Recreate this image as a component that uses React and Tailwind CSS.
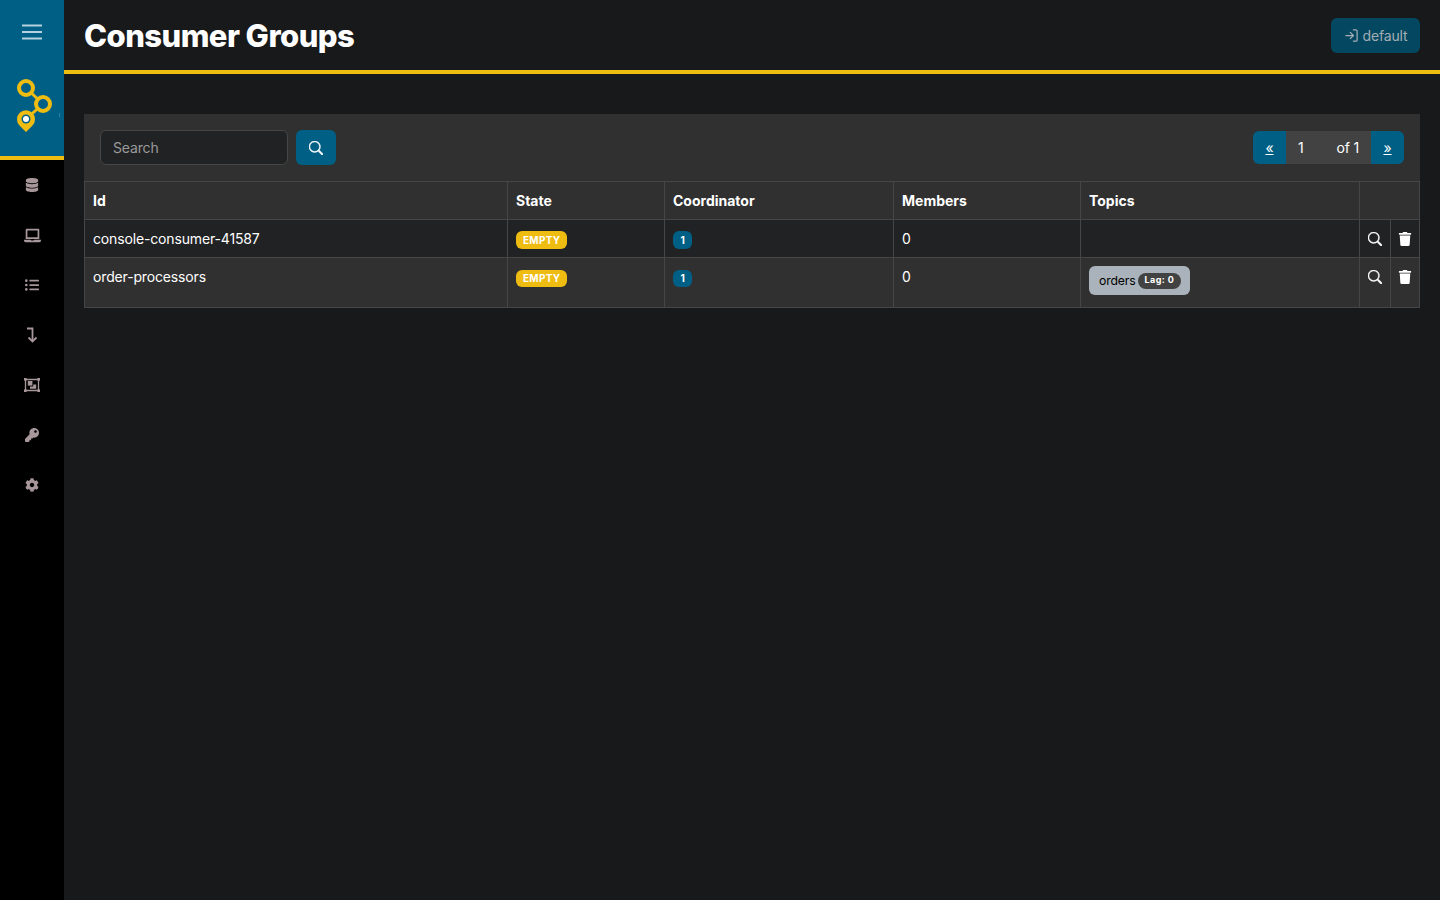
import React from 'react'
import { FaDatabase, FaLaptop, FaListUl, FaKey, FaCog, FaTrash } from 'react-icons/fa'
import { BsSearch } from 'react-icons/bs'
import { LogIn } from 'lucide-react'

function LevelDownIcon() {
  return (
    <svg width="12" height="16" viewBox="0 0 12 16" fill="none" stroke="currentColor" strokeWidth="1.800">
      <path d="M1 1.500H6.500V14" />
      <path d="M2.500 10.500L6.500 14.500L10.500 10.500" />
    </svg>
  )
}

function ObjectGroupIcon() {
  return (
    <svg width="16" height="14" viewBox="0 0 16 14" fill="currentColor">
      <path d="M1.500 1.500H14.500V12.500H1.500Z" fill="none" stroke="currentColor" strokeWidth="1.300" />
      <rect x="0" y="0" width="2.600" height="2.600" />
      <rect x="13.400" y="0" width="2.600" height="2.600" />
      <rect x="0" y="11.400" width="2.600" height="2.600" />
      <rect x="13.400" y="11.400" width="2.600" height="2.600" />
      <rect x="3.800" y="3" width="4.600" height="4.600" />
      <path d="M9.200 6.500H12.200V10.700H6V8.400H9.200Z" />
    </svg>
  )
}

const navIcons = [
  { Icon: FaDatabase },
  { Icon: FaLaptop, size: 17 },
  { Icon: FaListUl },
  { Icon: LevelDownIcon },
  { Icon: ObjectGroupIcon },
  { Icon: FaKey },
  { Icon: FaCog },
]

const groups = [
  { id: 'console-consumer-41587', topics: [], rowClass: 'bg-[#212224] h-[38px]', badgeClass: 'mt-[2px] h-[18px]' },
  { id: 'order-processors', topics: [{ name: 'orders', lag: 0 }], rowClass: 'bg-[#303030] h-[50px]', badgeClass: 'mt-[3px] h-[17px]' },
]

function Logo() {
  return (
    <svg width="64" height="72" viewBox="0 0 64 72" fill="none">
      <path d="M26 16 L43 32 L26 47" stroke="#efbc12" strokeWidth="3" />
      <circle cx="26" cy="16" r="7" fill="#005f85" stroke="#efbc12" strokeWidth="4" />
      <circle cx="43" cy="32" r="7" fill="#005f85" stroke="#efbc12" strokeWidth="4" />
      <path d="M26 60 L19.500 53.500 A9 9 0 1 1 32.500 53.500 Z" fill="#efbc12" />
      <circle cx="26" cy="47" r="4.500" fill="#005f85" />
      <circle cx="26" cy="47" r="3" fill="#ffffff" />
      <rect x="59" y="41" width="0.600" height="4" fill="#4d93ae" />
    </svg>
  )
}

function Sidebar() {
  return (
    <aside className="w-16 shrink-0 bg-black">
      <div className="h-[160px] bg-[#005f85] border-b-4 border-[#efbc12] flex flex-col items-center">
        <svg className="mt-[24px]" width="20" height="16" viewBox="0 0 20 16" fill="none" stroke="#b5d2de" strokeWidth="1.800">
          <path d="M0 1.500H20M0 8H20M0 14.500H20" />
        </svg>
        <div className="mt-[32px]">
          <Logo />
        </div>
      </div>
      <nav className="flex flex-col items-center">
        {navIcons.map(({ Icon, size }, i) => (
          <div key={i} className="h-[50px] w-full flex items-center justify-center text-[#a8979a] text-[14px]">
            <Icon size={size} />
          </div>
        ))}
      </nav>
    </aside>
  )
}

export default function App() {
  const th = 'border border-[#464646] px-2 h-[38px] text-left font-bold text-white align-middle'
  const td = 'border border-[#464646] px-2 pt-[9px] pb-0 align-top tracking-[-0.15px]'

  return (
    <div className="min-h-screen flex bg-[#18191b] text-white text-sm font-['Inter',sans-serif]">
      <Sidebar />
      <main className="flex-1 min-w-0">
        <header className="h-[74px] border-b-4 border-[#efbc12] flex items-center justify-between px-5">
          <h1 className="text-[31px] font-extrabold tracking-[-0.55px] pt-[3px]">Consumer Groups</h1>
          <button className="h-[35px] w-[89px] rounded-md bg-[#044760] text-[#a3aeb4] tracking-[-0.15px] flex items-center justify-center gap-1">
            <LogIn size={15} />
            <span className="pt-[1px]">default</span>
          </button>
        </header>

        <section className="mx-5 mt-10 bg-[#303030]">
          <div className="h-[67px] flex items-center justify-between px-4">
            <div className="flex gap-2">
              <input
                placeholder="Search"
                className="w-[188px] h-[35px] rounded-md border border-[#464646] bg-[#212224] px-3 text-white tracking-[-0.15px] placeholder:text-[#9a9a9a] outline-none"
              />
              <button className="w-10 h-[35px] rounded-md bg-[#005f85] flex items-center justify-center">
                <BsSearch className="text-[14px]" stroke="currentColor" strokeWidth="0.6" />
              </button>
            </div>
            <div className="flex h-[33px] rounded-md overflow-hidden">
              <a className="w-[33px] bg-[#005f85] flex items-center justify-center underline">«</a>
              <div className="w-[85px] bg-[#424242] flex items-center justify-between px-[12px] tracking-[-0.15px]">
                <span>1</span>
                <span>of 1</span>
              </div>
              <a className="w-[33px] bg-[#005f85] flex items-center justify-center underline">»</a>
            </div>
          </div>

          <table className="w-[1335px] table-fixed border-collapse">
            <colgroup>
              <col className="w-[423px]" />
              <col className="w-[157px]" />
              <col className="w-[229px]" />
              <col className="w-[187px]" />
              <col className="w-[279px]" />
              <col className="w-[31px]" />
              <col className="w-[29px]" />
            </colgroup>
            <thead>
              <tr>
                <th className={th}>Id</th>
                <th className={th}>State</th>
                <th className={th}>Coordinator</th>
                <th className={th}>Members</th>
                <th className={th}>Topics</th>
                <th className={th} colSpan={2}></th>
              </tr>
            </thead>
            <tbody>
              {groups.map((g) => (
                <tr key={g.id} className={g.rowClass}>
                  <td className={td}>{g.id}</td>
                  <td className={td}>
                    <span className={`inline-flex items-center rounded-md bg-[#efbc12] px-[7px] text-[10px] font-bold tracking-[0.3px] text-white align-top ${g.badgeClass}`}>EMPTY</span>
                  </td>
                  <td className={td}>
                    <span className={`inline-flex w-[19px] justify-center items-center rounded-md bg-[#005f85] text-[10px] font-bold text-white align-top ${g.badgeClass}`}>1</span>
                  </td>
                  <td className={td}>0</td>
                  <td className={td}>
                    {g.topics.map((t) => (
                      <span key={t.name} className="inline-flex h-[29px] -mt-[1px] items-center gap-[2px] rounded-md bg-[#aab3bb] pl-[10px] pr-[9px] text-[12.250px] text-black align-top">
                        {t.name}
                        <span className="inline-flex h-[16px] items-center rounded-lg bg-[#424242] px-[7px] text-[9px] font-bold tracking-[0.4px] text-white">Lag: {t.lag}</span>
                      </span>
                    ))}
                  </td>
                  <td className={`${td} !px-0`}>
                    <div className="flex justify-center h-[20px] items-center text-[14px]"><BsSearch stroke="currentColor" strokeWidth="0.6" /></div>
                  </td>
                  <td className={`${td} !px-0`}>
                    <div className="flex justify-center h-[20px] items-center text-[14px]"><FaTrash /></div>
                  </td>
                </tr>
              ))}
            </tbody>
          </table>
        </section>
      </main>
    </div>
  )
}
